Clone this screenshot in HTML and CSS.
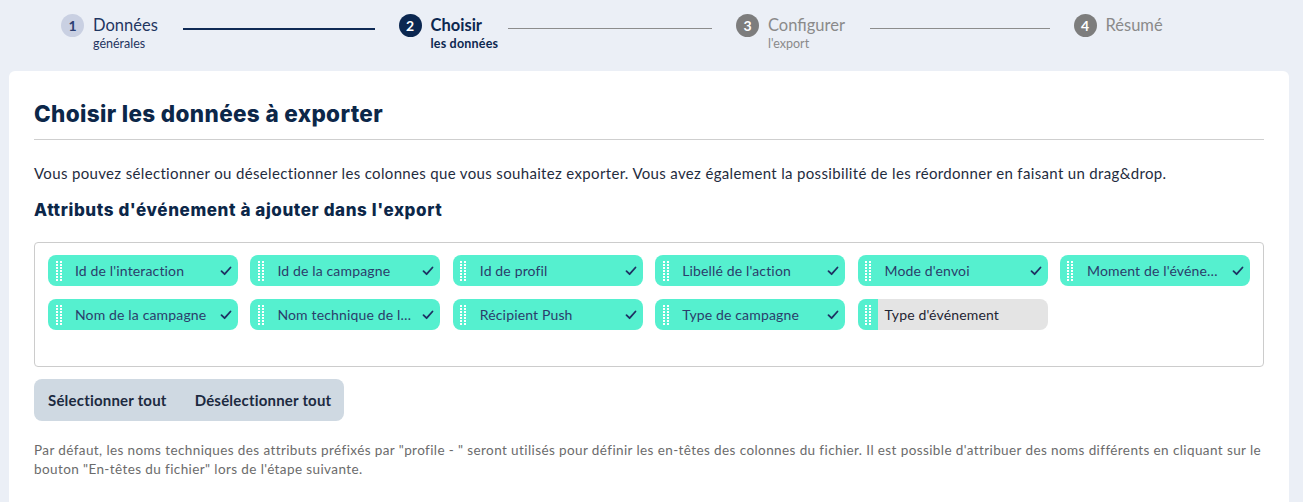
FILE: index.html
```html
<!DOCTYPE html>
<html lang="fr">
<head>
<meta charset="utf-8">
<title>Export</title>
<link rel="stylesheet" href="styles.css">
</head>
<body>
<div class="stepper">
  <div class="step done">
    <span class="num">1</span>
    <div class="labels"><span class="title">Données</span><span class="sub">générales</span></div>
    <span class="line"></span>
  </div>
  <div class="step active">
    <span class="num">2</span>
    <div class="labels"><span class="title">Choisir</span><span class="sub">les données</span></div>
    <span class="line"></span>
  </div>
  <div class="step todo">
    <span class="num">3</span>
    <div class="labels"><span class="title">Configurer</span><span class="sub">l'export</span></div>
    <span class="line"></span>
  </div>
  <div class="step todo">
    <span class="num">4</span>
    <div class="labels"><span class="title">Résumé</span></div>
  </div>
</div>

<main class="card">
  <h1 class="heading">Choisir les données à exporter</h1>
  <p class="intro">Vous pouvez sélectionner ou déselectionner les colonnes que vous souhaitez exporter. Vous avez également la possibilité de les réordonner en faisant un drag&amp;drop.</p>
  <h2 class="subheading">Attributs d'événement à ajouter dans l'export</h2>

  <div class="chips">
    <div class="chip on"><span class="handle"><svg viewBox="0 0 6 20" width="6" height="20"><g fill="#fff"><rect x="0" y="0" width="2" height="2"/><rect x="4" y="0" width="2" height="2"/><rect x="0" y="3" width="2" height="2"/><rect x="4" y="3" width="2" height="2"/><rect x="0" y="6" width="2" height="2"/><rect x="4" y="6" width="2" height="2"/><rect x="0" y="9" width="2" height="2"/><rect x="4" y="9" width="2" height="2"/><rect x="0" y="12" width="2" height="2"/><rect x="4" y="12" width="2" height="2"/><rect x="0" y="15" width="2" height="2"/><rect x="4" y="15" width="2" height="2"/><rect x="0" y="18" width="2" height="2"/><rect x="4" y="18" width="2" height="2"/></g></svg></span><span class="label">Id de l'interaction</span><svg class="check" viewBox="0 0 12 10" width="12" height="10"><path d="M1.5 5.2 4.6 8.2 10.5 1.5" fill="none" stroke="#1e3163" stroke-width="1.8" stroke-linecap="round" stroke-linejoin="round"/></svg></div>
    <div class="chip on"><span class="handle"><svg viewBox="0 0 6 20" width="6" height="20"><g fill="#fff"><rect x="0" y="0" width="2" height="2"/><rect x="4" y="0" width="2" height="2"/><rect x="0" y="3" width="2" height="2"/><rect x="4" y="3" width="2" height="2"/><rect x="0" y="6" width="2" height="2"/><rect x="4" y="6" width="2" height="2"/><rect x="0" y="9" width="2" height="2"/><rect x="4" y="9" width="2" height="2"/><rect x="0" y="12" width="2" height="2"/><rect x="4" y="12" width="2" height="2"/><rect x="0" y="15" width="2" height="2"/><rect x="4" y="15" width="2" height="2"/><rect x="0" y="18" width="2" height="2"/><rect x="4" y="18" width="2" height="2"/></g></svg></span><span class="label">Id de la campagne</span><svg class="check" viewBox="0 0 12 10" width="12" height="10"><path d="M1.5 5.2 4.6 8.2 10.5 1.5" fill="none" stroke="#1e3163" stroke-width="1.8" stroke-linecap="round" stroke-linejoin="round"/></svg></div>
    <div class="chip on"><span class="handle"><svg viewBox="0 0 6 20" width="6" height="20"><g fill="#fff"><rect x="0" y="0" width="2" height="2"/><rect x="4" y="0" width="2" height="2"/><rect x="0" y="3" width="2" height="2"/><rect x="4" y="3" width="2" height="2"/><rect x="0" y="6" width="2" height="2"/><rect x="4" y="6" width="2" height="2"/><rect x="0" y="9" width="2" height="2"/><rect x="4" y="9" width="2" height="2"/><rect x="0" y="12" width="2" height="2"/><rect x="4" y="12" width="2" height="2"/><rect x="0" y="15" width="2" height="2"/><rect x="4" y="15" width="2" height="2"/><rect x="0" y="18" width="2" height="2"/><rect x="4" y="18" width="2" height="2"/></g></svg></span><span class="label">Id de profil</span><svg class="check" viewBox="0 0 12 10" width="12" height="10"><path d="M1.5 5.2 4.6 8.2 10.5 1.5" fill="none" stroke="#1e3163" stroke-width="1.8" stroke-linecap="round" stroke-linejoin="round"/></svg></div>
    <div class="chip on"><span class="handle"><svg viewBox="0 0 6 20" width="6" height="20"><g fill="#fff"><rect x="0" y="0" width="2" height="2"/><rect x="4" y="0" width="2" height="2"/><rect x="0" y="3" width="2" height="2"/><rect x="4" y="3" width="2" height="2"/><rect x="0" y="6" width="2" height="2"/><rect x="4" y="6" width="2" height="2"/><rect x="0" y="9" width="2" height="2"/><rect x="4" y="9" width="2" height="2"/><rect x="0" y="12" width="2" height="2"/><rect x="4" y="12" width="2" height="2"/><rect x="0" y="15" width="2" height="2"/><rect x="4" y="15" width="2" height="2"/><rect x="0" y="18" width="2" height="2"/><rect x="4" y="18" width="2" height="2"/></g></svg></span><span class="label">Libellé de l'action</span><svg class="check" viewBox="0 0 12 10" width="12" height="10"><path d="M1.5 5.2 4.6 8.2 10.5 1.5" fill="none" stroke="#1e3163" stroke-width="1.8" stroke-linecap="round" stroke-linejoin="round"/></svg></div>
    <div class="chip on"><span class="handle"><svg viewBox="0 0 6 20" width="6" height="20"><g fill="#fff"><rect x="0" y="0" width="2" height="2"/><rect x="4" y="0" width="2" height="2"/><rect x="0" y="3" width="2" height="2"/><rect x="4" y="3" width="2" height="2"/><rect x="0" y="6" width="2" height="2"/><rect x="4" y="6" width="2" height="2"/><rect x="0" y="9" width="2" height="2"/><rect x="4" y="9" width="2" height="2"/><rect x="0" y="12" width="2" height="2"/><rect x="4" y="12" width="2" height="2"/><rect x="0" y="15" width="2" height="2"/><rect x="4" y="15" width="2" height="2"/><rect x="0" y="18" width="2" height="2"/><rect x="4" y="18" width="2" height="2"/></g></svg></span><span class="label">Mode d'envoi</span><svg class="check" viewBox="0 0 12 10" width="12" height="10"><path d="M1.5 5.2 4.6 8.2 10.5 1.5" fill="none" stroke="#1e3163" stroke-width="1.8" stroke-linecap="round" stroke-linejoin="round"/></svg></div>
    <div class="chip on"><span class="handle"><svg viewBox="0 0 6 20" width="6" height="20"><g fill="#fff"><rect x="0" y="0" width="2" height="2"/><rect x="4" y="0" width="2" height="2"/><rect x="0" y="3" width="2" height="2"/><rect x="4" y="3" width="2" height="2"/><rect x="0" y="6" width="2" height="2"/><rect x="4" y="6" width="2" height="2"/><rect x="0" y="9" width="2" height="2"/><rect x="4" y="9" width="2" height="2"/><rect x="0" y="12" width="2" height="2"/><rect x="4" y="12" width="2" height="2"/><rect x="0" y="15" width="2" height="2"/><rect x="4" y="15" width="2" height="2"/><rect x="0" y="18" width="2" height="2"/><rect x="4" y="18" width="2" height="2"/></g></svg></span><span class="label">Moment de l'événement</span><svg class="check" viewBox="0 0 12 10" width="12" height="10"><path d="M1.5 5.2 4.6 8.2 10.5 1.5" fill="none" stroke="#1e3163" stroke-width="1.8" stroke-linecap="round" stroke-linejoin="round"/></svg></div>
    <div class="chip on"><span class="handle"><svg viewBox="0 0 6 20" width="6" height="20"><g fill="#fff"><rect x="0" y="0" width="2" height="2"/><rect x="4" y="0" width="2" height="2"/><rect x="0" y="3" width="2" height="2"/><rect x="4" y="3" width="2" height="2"/><rect x="0" y="6" width="2" height="2"/><rect x="4" y="6" width="2" height="2"/><rect x="0" y="9" width="2" height="2"/><rect x="4" y="9" width="2" height="2"/><rect x="0" y="12" width="2" height="2"/><rect x="4" y="12" width="2" height="2"/><rect x="0" y="15" width="2" height="2"/><rect x="4" y="15" width="2" height="2"/><rect x="0" y="18" width="2" height="2"/><rect x="4" y="18" width="2" height="2"/></g></svg></span><span class="label">Nom de la campagne</span><svg class="check" viewBox="0 0 12 10" width="12" height="10"><path d="M1.5 5.2 4.6 8.2 10.5 1.5" fill="none" stroke="#1e3163" stroke-width="1.8" stroke-linecap="round" stroke-linejoin="round"/></svg></div>
    <div class="chip on"><span class="handle"><svg viewBox="0 0 6 20" width="6" height="20"><g fill="#fff"><rect x="0" y="0" width="2" height="2"/><rect x="4" y="0" width="2" height="2"/><rect x="0" y="3" width="2" height="2"/><rect x="4" y="3" width="2" height="2"/><rect x="0" y="6" width="2" height="2"/><rect x="4" y="6" width="2" height="2"/><rect x="0" y="9" width="2" height="2"/><rect x="4" y="9" width="2" height="2"/><rect x="0" y="12" width="2" height="2"/><rect x="4" y="12" width="2" height="2"/><rect x="0" y="15" width="2" height="2"/><rect x="4" y="15" width="2" height="2"/><rect x="0" y="18" width="2" height="2"/><rect x="4" y="18" width="2" height="2"/></g></svg></span><span class="label">Nom technique de la campagne</span><svg class="check" viewBox="0 0 12 10" width="12" height="10"><path d="M1.5 5.2 4.6 8.2 10.5 1.5" fill="none" stroke="#1e3163" stroke-width="1.8" stroke-linecap="round" stroke-linejoin="round"/></svg></div>
    <div class="chip on"><span class="handle"><svg viewBox="0 0 6 20" width="6" height="20"><g fill="#fff"><rect x="0" y="0" width="2" height="2"/><rect x="4" y="0" width="2" height="2"/><rect x="0" y="3" width="2" height="2"/><rect x="4" y="3" width="2" height="2"/><rect x="0" y="6" width="2" height="2"/><rect x="4" y="6" width="2" height="2"/><rect x="0" y="9" width="2" height="2"/><rect x="4" y="9" width="2" height="2"/><rect x="0" y="12" width="2" height="2"/><rect x="4" y="12" width="2" height="2"/><rect x="0" y="15" width="2" height="2"/><rect x="4" y="15" width="2" height="2"/><rect x="0" y="18" width="2" height="2"/><rect x="4" y="18" width="2" height="2"/></g></svg></span><span class="label">Récipient Push</span><svg class="check" viewBox="0 0 12 10" width="12" height="10"><path d="M1.5 5.2 4.6 8.2 10.5 1.5" fill="none" stroke="#1e3163" stroke-width="1.8" stroke-linecap="round" stroke-linejoin="round"/></svg></div>
    <div class="chip on"><span class="handle"><svg viewBox="0 0 6 20" width="6" height="20"><g fill="#fff"><rect x="0" y="0" width="2" height="2"/><rect x="4" y="0" width="2" height="2"/><rect x="0" y="3" width="2" height="2"/><rect x="4" y="3" width="2" height="2"/><rect x="0" y="6" width="2" height="2"/><rect x="4" y="6" width="2" height="2"/><rect x="0" y="9" width="2" height="2"/><rect x="4" y="9" width="2" height="2"/><rect x="0" y="12" width="2" height="2"/><rect x="4" y="12" width="2" height="2"/><rect x="0" y="15" width="2" height="2"/><rect x="4" y="15" width="2" height="2"/><rect x="0" y="18" width="2" height="2"/><rect x="4" y="18" width="2" height="2"/></g></svg></span><span class="label">Type de campagne</span><svg class="check" viewBox="0 0 12 10" width="12" height="10"><path d="M1.5 5.2 4.6 8.2 10.5 1.5" fill="none" stroke="#1e3163" stroke-width="1.8" stroke-linecap="round" stroke-linejoin="round"/></svg></div>
    <div class="chip off"><span class="handle"><svg viewBox="0 0 6 20" width="6" height="20"><g fill="#fff"><rect x="0" y="0" width="2" height="2"/><rect x="4" y="0" width="2" height="2"/><rect x="0" y="3" width="2" height="2"/><rect x="4" y="3" width="2" height="2"/><rect x="0" y="6" width="2" height="2"/><rect x="4" y="6" width="2" height="2"/><rect x="0" y="9" width="2" height="2"/><rect x="4" y="9" width="2" height="2"/><rect x="0" y="12" width="2" height="2"/><rect x="4" y="12" width="2" height="2"/><rect x="0" y="15" width="2" height="2"/><rect x="4" y="15" width="2" height="2"/><rect x="0" y="18" width="2" height="2"/><rect x="4" y="18" width="2" height="2"/></g></svg></span><span class="label">Type d'événement</span></div>
  </div>

  <div class="actions">
    <button class="btn">Sélectionner tout</button>
    <button class="btn">Désélectionner tout</button>
  </div>

  <p class="note">Par défaut, les noms techniques des attributs préfixés par "profile - " seront utilisés pour définir les en-têtes des colonnes du fichier. Il est possible d'attribuer des noms différents en cliquant sur le bouton "En-têtes du fichier" lors de l'étape suivante.</p>
</main>
</body>
</html>
```

FILE: styles.css
```css
* { box-sizing: border-box; }

html, body {
  margin: 0;
  padding: 0;
  background: #ebeff6;
  font-family: "Lato", "Noto Sans", sans-serif;
  color: #1d2b3f;
  overflow: hidden;
}

body {
  height: 502px;
  display: flex;
  flex-direction: column;
}

/* Stepper */
.stepper {
  display: grid;
  grid-template-columns: repeat(4, 337.5px);
  padding: 14px 0 0 61px;
  height: 71px;
}

.step {
  display: flex;
  align-items: flex-start;
}

.num {
  flex: none;
  width: 23px;
  height: 23px;
  border-radius: 50%;
  display: flex;
  align-items: center;
  justify-content: center;
  font-size: 14px;
  font-weight: 700;
  margin-right: 9px;
}

.labels {
  display: flex;
  flex-direction: column;
}

.title {
  font-size: 16.5px;
  line-height: 22px;
}

.sub {
  font-size: 12.5px;
  line-height: 15px;
}

.line {
  flex: 1;
  height: 1px;
  margin: 14px 24px 0 25px;
}

.step.done .num { background: #c9d0e2; color: #2c3f72; }
.step.done .title { color: #1f3561; }
.step.done .sub { color: #1f3561; }
.step.done .line { background: #0f2a55; height: 1.5px; }

.step.active .num { background: #0b2750; color: #fff; }
.step.active .title { color: #0b2750; font-weight: 700; }
.step.active .sub { color: #0b2750; font-weight: 700; letter-spacing: 0.2px; }
.step.active .line { background: #8c8c8c; margin-left: 10px; }

.step.todo .num { background: #7d7d7d; color: #fff; }
.step.todo .title { color: #8a8a8a; }
.step.todo .sub { color: #8a8a8a; }
.step.todo .line { background: #8c8c8c; }

/* Card */
.card {
  flex: 1;
  margin: 0 14px 0 9px;
  background: #fff;
  border-radius: 6px 6px 0 0;
  padding: 29px 25px 0 25px;
}

.heading {
  margin: 0;
  font-family: "Inter", sans-serif;
  font-weight: 800;
  font-size: 22.5px;
  line-height: 28px;
  color: #0c2749;
  padding-bottom: 11px;
  border-bottom: 1px solid #cfcfcf;
  letter-spacing: 0.35px;
}

.intro {
  margin: 23px 0 0 0;
  font-size: 15px;
  line-height: 20px;
  color: #1f2c3e;
  letter-spacing: 0.34px;
}

.subheading {
  margin: 16px 0 0 0;
  font-family: "Inter", sans-serif;
  font-weight: 800;
  font-size: 17px;
  line-height: 22px;
  color: #0c2749;
  letter-spacing: 0.6px;
}

.chips {
  margin-top: 21px;
  border: 1px solid #cccccc;
  border-radius: 4px;
  padding: 12px 13px 36px 13px;
  display: grid;
  grid-template-columns: repeat(6, 190px);
  column-gap: 12.4px;
  row-gap: 13px;
}

.chip {
  height: 31px;
  border-radius: 8px;
  display: flex;
  align-items: center;
  overflow: hidden;
  font-size: 14px;
  letter-spacing: 0.15px;
}

.chip .handle {
  flex: none;
  width: 20px;
  height: 100%;
  display: flex;
  align-items: center;
  justify-content: center;
  padding-left: 1px;
}

.chip .label {
  flex: 1;
  min-width: 0;
  white-space: nowrap;
  overflow: hidden;
  text-overflow: ellipsis;
  padding-left: 7px;
}

.chip .check {
  flex: none;
  margin: 0 6px 0 8px;
}

.chip.on {
  background: #55f0cf;
  color: #2b3d6b;
}

.chip.off {
  background: #e4e4e4;
  color: #1f2533;
}

.chip.off .handle { background: #55f0cf; }

/* Actions */
.actions {
  margin-top: 12px;
  display: inline-flex;
  background: #cfd9e2;
  border-radius: 8px;
  height: 42px;
  align-items: center;
  padding: 0 13px 0 14px;
  gap: 28px;
}

.btn {
  border: none;
  background: transparent;
  padding: 0;
  font-family: "Lato", "Noto Sans", sans-serif;
  font-size: 15px;
  font-weight: 700;
  letter-spacing: 0.2px;
  color: #1c2a40;
  cursor: pointer;
}

.note {
  margin: 20px 0 0 0;
  font-size: 13.5px;
  line-height: 19px;
  color: #6b6b6b;
  letter-spacing: 0.4px;
}
```
